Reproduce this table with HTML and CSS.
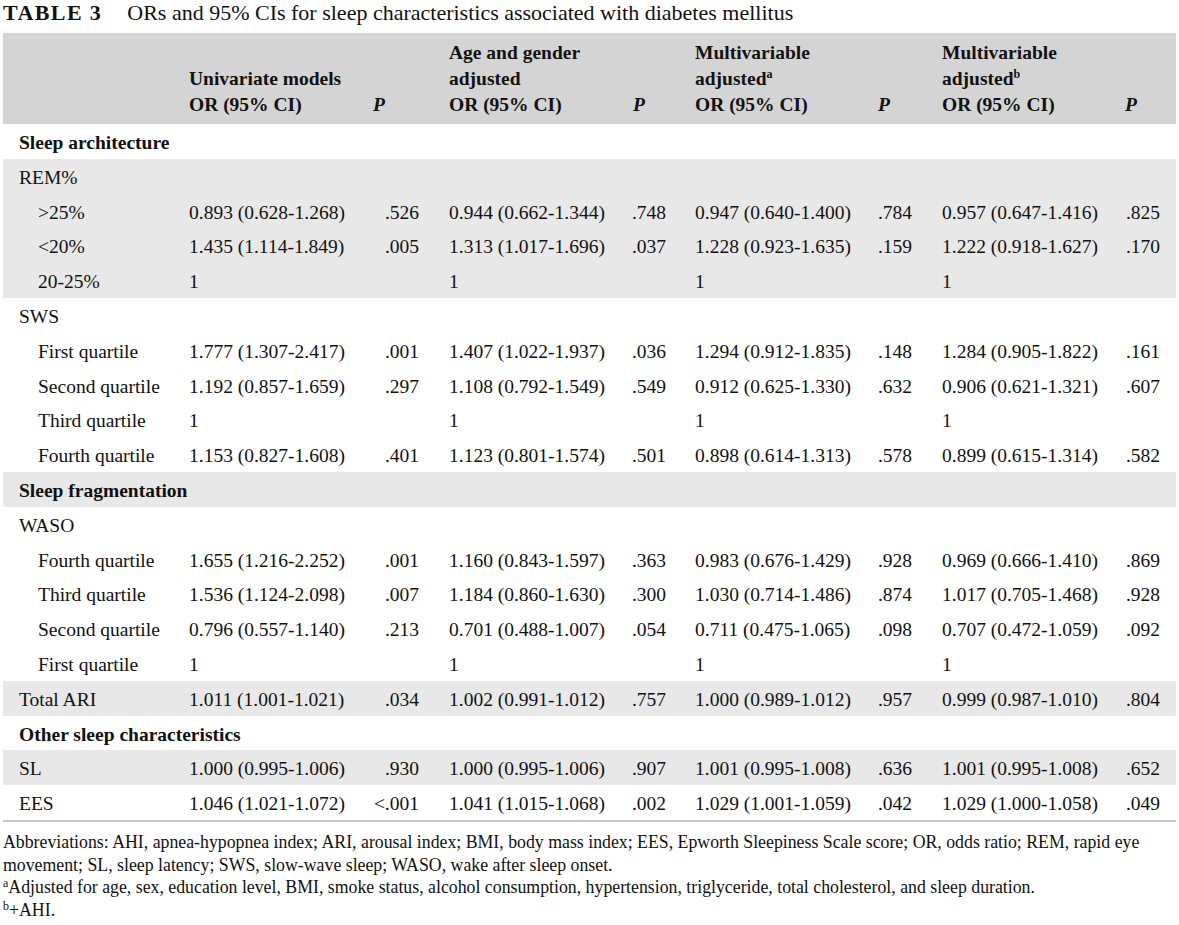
FILE: index.html
```html
<!DOCTYPE html>
<html lang="en">
<head>
<meta charset="utf-8">
<title>Table 3</title>
<link rel="stylesheet" href="styles.css">
</head>
<body>
<div class="page">
  <div class="caption"><span class="label">TABLE 3</span><span class="caption-text">ORs and 95% CIs for sleep characteristics associated with diabetes mellitus</span></div>
  <table class="data">
    <colgroup>
      <col class="c-name"><col class="c-or"><col class="c-p1"><col class="c-or"><col class="c-p2"><col class="c-or"><col class="c-p3"><col class="c-or"><col class="c-p4">
    </colgroup>
    <thead>
      <tr>
        <th></th>
        <th>Univariate models<br>OR (95% CI)</th>
        <th class="ph"><i>P</i></th>
        <th>Age and gender<br>adjusted<br>OR (95% CI)</th>
        <th class="ph"><i>P</i></th>
        <th>Multivariable<br>adjusted<sup>a</sup><br>OR (95% CI)</th>
        <th class="ph"><i>P</i></th>
        <th>Multivariable<br>adjusted<sup>b</sup><br>OR (95% CI)</th>
        <th class="ph"><i>P</i></th>
      </tr>
    </thead>
    <tbody>
      <tr class="section"><td colspan="9">Sleep architecture</td></tr>
      <tr class="shade"><td>REM%</td><td></td><td></td><td></td><td></td><td></td><td></td><td></td><td></td></tr>
      <tr class="shade"><td class="sub">&gt;25%</td><td>0.893 (0.628-1.268)</td><td class="p">.526</td><td>0.944 (0.662-1.344)</td><td class="p">.748</td><td>0.947 (0.640-1.400)</td><td class="p">.784</td><td>0.957 (0.647-1.416)</td><td class="p">.825</td></tr>
      <tr class="shade"><td class="sub">&lt;20%</td><td>1.435 (1.114-1.849)</td><td class="p">.005</td><td>1.313 (1.017-1.696)</td><td class="p">.037</td><td>1.228 (0.923-1.635)</td><td class="p">.159</td><td>1.222 (0.918-1.627)</td><td class="p">.170</td></tr>
      <tr class="shade"><td class="sub">20-25%</td><td>1</td><td class="p"></td><td>1</td><td class="p"></td><td>1</td><td class="p"></td><td>1</td><td class="p"></td></tr>
      <tr><td>SWS</td><td></td><td></td><td></td><td></td><td></td><td></td><td></td><td></td></tr>
      <tr><td class="sub">First quartile</td><td>1.777 (1.307-2.417)</td><td class="p">.001</td><td>1.407 (1.022-1.937)</td><td class="p">.036</td><td>1.294 (0.912-1.835)</td><td class="p">.148</td><td>1.284 (0.905-1.822)</td><td class="p">.161</td></tr>
      <tr><td class="sub">Second quartile</td><td>1.192 (0.857-1.659)</td><td class="p">.297</td><td>1.108 (0.792-1.549)</td><td class="p">.549</td><td>0.912 (0.625-1.330)</td><td class="p">.632</td><td>0.906 (0.621-1.321)</td><td class="p">.607</td></tr>
      <tr><td class="sub">Third quartile</td><td>1</td><td class="p"></td><td>1</td><td class="p"></td><td>1</td><td class="p"></td><td>1</td><td class="p"></td></tr>
      <tr><td class="sub">Fourth quartile</td><td>1.153 (0.827-1.608)</td><td class="p">.401</td><td>1.123 (0.801-1.574)</td><td class="p">.501</td><td>0.898 (0.614-1.313)</td><td class="p">.578</td><td>0.899 (0.615-1.314)</td><td class="p">.582</td></tr>
      <tr class="section shade"><td colspan="9">Sleep fragmentation</td></tr>
      <tr><td>WASO</td><td></td><td></td><td></td><td></td><td></td><td></td><td></td><td></td></tr>
      <tr><td class="sub">Fourth quartile</td><td>1.655 (1.216-2.252)</td><td class="p">.001</td><td>1.160 (0.843-1.597)</td><td class="p">.363</td><td>0.983 (0.676-1.429)</td><td class="p">.928</td><td>0.969 (0.666-1.410)</td><td class="p">.869</td></tr>
      <tr><td class="sub">Third quartile</td><td>1.536 (1.124-2.098)</td><td class="p">.007</td><td>1.184 (0.860-1.630)</td><td class="p">.300</td><td>1.030 (0.714-1.486)</td><td class="p">.874</td><td>1.017 (0.705-1.468)</td><td class="p">.928</td></tr>
      <tr><td class="sub">Second quartile</td><td>0.796 (0.557-1.140)</td><td class="p">.213</td><td>0.701 (0.488-1.007)</td><td class="p">.054</td><td>0.711 (0.475-1.065)</td><td class="p">.098</td><td>0.707 (0.472-1.059)</td><td class="p">.092</td></tr>
      <tr><td class="sub">First quartile</td><td>1</td><td class="p"></td><td>1</td><td class="p"></td><td>1</td><td class="p"></td><td>1</td><td class="p"></td></tr>
      <tr class="shade"><td>Total ARI</td><td>1.011 (1.001-1.021)</td><td class="p">.034</td><td>1.002 (0.991-1.012)</td><td class="p">.757</td><td>1.000 (0.989-1.012)</td><td class="p">.957</td><td>0.999 (0.987-1.010)</td><td class="p">.804</td></tr>
      <tr class="section"><td colspan="9">Other sleep characteristics</td></tr>
      <tr class="shade"><td>SL</td><td>1.000 (0.995-1.006)</td><td class="p">.930</td><td>1.000 (0.995-1.006)</td><td class="p">.907</td><td>1.001 (0.995-1.008)</td><td class="p">.636</td><td>1.001 (0.995-1.008)</td><td class="p">.652</td></tr>
      <tr class="last"><td>EES</td><td>1.046 (1.021-1.072)</td><td class="p">&lt;.001</td><td>1.041 (1.015-1.068)</td><td class="p">.002</td><td>1.029 (1.001-1.059)</td><td class="p">.042</td><td>1.029 (1.000-1.058)</td><td class="p">.049</td></tr>
    </tbody>
  </table>
  <div class="notes">
    <p>Abbreviations: AHI, apnea-hypopnea index; ARI, arousal index; BMI, body mass index; EES, Epworth Sleepiness Scale score; OR, odds ratio; REM, rapid eye movement; SL, sleep latency; SWS, slow-wave sleep; WASO, wake after sleep onset.</p>
    <p><sup>a</sup>Adjusted for age, sex, education level, BMI, smoke status, alcohol consumption, hypertension, triglyceride, total cholesterol, and sleep duration.</p>
    <p><sup>b</sup>+AHI.</p>
  </div>
</div>
</body>
</html>
```
FILE: styles.css
```css
html, body {
  margin: 0;
  padding: 0;
  background: #ffffff;
}
body {
  font-family: "Liberation Serif", "Times New Roman", serif;
  color: #111111;
}
.page {
  padding: 0 3px;
  width: 1173px;
}
.caption {
  font-size: 22px;
  line-height: 26px;
  margin-bottom: 7px;
  white-space: nowrap;
}
.caption .label {
  font-weight: bold;
  letter-spacing: 1.4px;
  margin-right: 25px;
}
.data {
  border-collapse: collapse;
  table-layout: fixed;
  width: 1173px;
  font-size: 19.5px;
}
.c-name { width: 170px; }
.c-or { width: 184px; }
.c-p1 { width: 76px; }
.c-p2 { width: 62px; }
.c-p3 { width: 64px; }
.c-p4 { width: 67px; }
.data col:nth-child(6), .data col:nth-child(8) { width: 183px; }
.data thead tr {
  background: #d4d4d4;
}
.data th {
  font-weight: bold;
  text-align: left;
  vertical-align: bottom;
  line-height: 26px;
  padding: 7px 0 6px 16px;
  white-space: nowrap;
}
.data th sup {
  font-size: 12px;
  line-height: 0;
  vertical-align: 7px;
}
.data td {
  height: 34.8px;
  box-sizing: border-box;
  line-height: 22.8px;
  padding: 8px 0 4px 16px;
  white-space: nowrap;
  vertical-align: top;
}
.data td.sub {
  padding-left: 35px;
}
.data td.p {
  text-align: right;
  padding-left: 0;
  padding-right: 14px;
}
.data tr td.p:last-child {
  padding-right: 16px;
}
.data td:nth-child(5).p { padding-right: 13px; }
.data tr.section td {
  font-weight: bold;
}
.data tr.shade {
  background: #e8e8e8;
}
.data tr.last td {
  border-bottom: 2px solid #c8c8c8;
}
.notes {
  margin-top: 9px;
  font-size: 17.8px;
  line-height: 22.7px;
}
.notes p {
  margin: 0;
}
.notes sup {
  font-size: 12px;
  line-height: 0;
  vertical-align: 6px;
}
```
